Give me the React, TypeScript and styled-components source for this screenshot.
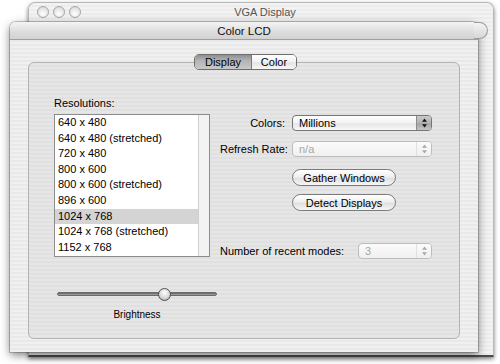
import React from "react";
import styled, { createGlobalStyle } from "styled-components";

const Global = createGlobalStyle`
  html, body { margin: 0; padding: 0; background: #ffffff; }
  body { font-family: "Liberation Sans", Arial, sans-serif; font-size: 11px; color: #000; }
  * { box-sizing: border-box; }
`;

const stripes = (a: string, b: string) =>
  `repeating-linear-gradient(to bottom, ${a} 0px, ${a} 2px, ${b} 2px, ${b} 4px)`;

const Desktop = styled.div`
  position: relative;
  width: 500px;
  height: 364px;
  overflow: hidden;
  background: #ffffff;
`;

const BackWindow = styled.div`
  position: absolute;
  left: 28px;
  top: 2px;
  width: 466px;
  height: 355px;
  border: 1px solid #b8b8b8;
  border-bottom: 2px solid #4a4a4a;
  border-radius: 7px 7px 0 0;
  background: ${stripes("#f3f3f3", "#ececec")};
  box-shadow: 0 2px 4px rgba(0, 0, 0, 0.5);
`;

const BackTitleBar = styled.div`
  height: 18px;
  display: flex;
  align-items: center;
  padding-left: 8px;
`;

const Lights = styled.div`
  display: flex;
  gap: 4px;
`;

const Light = styled.span`
  width: 12px;
  height: 12px;
  border-radius: 50%;
  border: 1px solid #a5a5a5;
  background: radial-gradient(circle at 50% 70%, #ffffff 0%, #e6e6e6 60%, #cfcfcf 100%);
`;

const BackTitle = styled.div`
  flex: 1;
  text-align: center;
  color: #555;
  font-size: 11px;
  padding-right: 44px;
`;

const FrontWindow = styled.div`
  position: absolute;
  left: 10px;
  top: 22px;
  width: 468px;
  height: 330px;
  display: flex;
  flex-direction: column;
  border-radius: 6px 6px 0 0;
  background: ${stripes("#f0f0f0", "#e9e9e9")};
  box-shadow: 0 0 0 1px rgba(0, 0, 0, 0.2), 0 3px 10px rgba(0, 0, 0, 0.5);
`;

const TitleBar = styled.div`
  position: relative;
  height: 18px;
  flex: none;
  display: flex;
  align-items: center;
  justify-content: center;
  font-size: 11.5px;
  color: #111;
  border-radius: 6px 6px 0 0;
  border-bottom: 1px solid #a0a0a0;
  background: linear-gradient(to bottom, #f4f4f4, #dcdcdc 60%, #d2d2d2);
`;

const TitleCap = styled.span`
  position: absolute;
  right: -10px;
  top: 0;
  width: 14px;
  height: 17px;
  border: 1px solid #9a9a9a;
  border-left: none;
  border-radius: 0 9px 9px 0;
  background: linear-gradient(to bottom, #f4f4f4, #d6d6d6);
`;

const Body = styled.div`
  flex: 1;
  display: flex;
  flex-direction: column;
  align-items: stretch;
  padding: 14px 18px 13px 18px;
`;

const Segmented = styled.div`
  position: relative;
  z-index: 1;
  align-self: center;
  margin-left: 3px;
  margin-bottom: -8px;
  display: flex;
  height: 16px;
  border: 1px solid #6e6e6e;
  border-radius: 5px;
  overflow: hidden;
  background: #fff;
`;

const Segment = styled.div<{ $active?: boolean; $w: number }>`
  width: ${(p) => p.$w}px;
  display: flex;
  align-items: center;
  justify-content: center;
  font-size: 11px;
  line-height: 14px;
  background: ${(p) =>
    p.$active
      ? "linear-gradient(to bottom, #8f8f8f, #b4b4b4 40%, #c8c8c8)"
      : "linear-gradient(to bottom, #ffffff, #f1f1f1 50%, #e4e4e4 55%, #f7f7f7)"};
  & + & {
    border-left: 1px solid #7a7a7a;
  }
`;

const TabBox = styled.div`
  flex: 1;
  border: 1px solid #b3b3b3;
  border-radius: 6px;
  background: ${stripes("#e6e6e6", "#e0e0e0")};
  padding: 33px 27px 0 25px;
  display: grid;
  grid-template-columns: 156px 1fr;
  column-gap: 10px;
  align-items: start;
`;

const LeftCol = styled.div`
  display: flex;
  flex-direction: column;
`;

const Label = styled.div`
  line-height: 14px;
  height: 14px;
  white-space: nowrap;
`;

const ListBox = styled.div`
  margin-top: 4px;
  height: 143px;
  display: flex;
  border: 1px solid #8c8c8c;
  background: #fff;
`;

const Rows = styled.div`
  flex: 1;
`;

const Row = styled.div<{ $selected?: boolean }>`
  height: 15.6px;
  line-height: 15.6px;
  padding-left: 3px;
  white-space: nowrap;
  background: ${(p) => (p.$selected ? "#d4d4d4" : "transparent")};
`;

const ScrollTrack = styled.div`
  width: 11px;
  border-left: 1px solid #cfcfcf;
  background: #f3f3f3;
`;

const Slider = styled.div`
  position: relative;
  margin-top: 31px;
  margin-left: 3px;
  width: 160px;
  height: 12px;
  display: flex;
  align-items: center;
`;

const Track = styled.div`
  width: 100%;
  height: 4px;
  border-radius: 2px;
  background: linear-gradient(to bottom, #5e5e5e, #8a8a8a 60%, #b0b0b0);
  border: 1px solid #6a6a6a;
`;

const Knob = styled.span`
  position: absolute;
  top: 0;
  width: 13px;
  height: 13px;
  border-radius: 50%;
  border: 1px solid #4f4f4f;
  background: radial-gradient(circle at 50% 35%, #ffffff 0%, #d8d8d8 55%, #9c9c9c 100%);
`;

const Caption = styled.div`
  margin-top: 9px;
  margin-left: 3px;
  width: 160px;
  text-align: center;
  font-size: 10px;
  line-height: 12px;
`;

const RightCol = styled.div`
  padding-top: 19px;
  display: flex;
  flex-direction: column;
`;

const FieldRow = styled.div<{ $gap?: number }>`
  display: grid;
  grid-template-columns: 65px 140px;
  column-gap: 7px;
  align-items: center;
  margin-top: ${(p) => p.$gap ?? 0}px;
`;

const FieldLabel = styled.div`
  text-align: right;
  white-space: nowrap;
`;

const Popup = styled.div<{ $disabled?: boolean; $w?: number }>`
  width: ${(p) => (p.$w ? `${p.$w}px` : "100%")};
  height: 16px;
  display: flex;
  border: 1px solid ${(p) => (p.$disabled ? "#bdbdbd" : "#767676")};
  border-radius: 4px;
  overflow: hidden;
  background: ${(p) =>
    p.$disabled
      ? "linear-gradient(to bottom, #fbfbfb, #f0f0f0)"
      : "linear-gradient(to bottom, #ffffff, #f2f2f2 50%, #e6e6e6 55%, #f8f8f8)"};
  color: ${(p) => (p.$disabled ? "#a6a6a6" : "#000")};
`;

const PopupText = styled.div`
  flex: 1;
  padding-left: 6px;
  line-height: 14px;
  white-space: nowrap;
`;

const PopupArrows = styled.div<{ $disabled?: boolean }>`
  width: 15px;
  display: flex;
  align-items: center;
  justify-content: center;
  border-left: 1px solid ${(p) => (p.$disabled ? "#e0e0e0" : "#8c8c8c")};
  background: ${(p) =>
    p.$disabled
      ? "linear-gradient(to bottom, #fbfbfb, #f0f0f0)"
      : "linear-gradient(to bottom, #c9c9c9, #b2b2b2 50%, #a4a4a4 55%, #c4c4c4)"};
`;

const PushButton = styled.div<{ $gap: number }>`
  margin-left: 72px;
  margin-top: ${(p) => p.$gap}px;
  width: 104px;
  height: 17px;
  display: flex;
  align-items: center;
  justify-content: center;
  border: 1px solid #7a7a7a;
  border-radius: 9px;
  background: linear-gradient(to bottom, #ffffff, #f0f0f0 45%, #e0e0e0 55%, #f6f6f6);
  white-space: nowrap;
`;

const SplitRow = styled.div`
  margin-top: 32px;
  display: flex;
  align-items: center;
  justify-content: space-between;
  width: 212px;
`;

const Arrows: React.FC<{ color: string }> = ({ color }) => (
  <svg width="7" height="10" viewBox="0 0 7 10">
    <path d="M3.5 0.5 L6 3.8 L1 3.8 Z" fill={color} />
    <path d="M3.5 9.5 L6 6.2 L1 6.2 Z" fill={color} />
  </svg>
);

const resolutions = [
  "640 x 480",
  "640 x 480 (stretched)",
  "720 x 480",
  "800 x 600",
  "800 x 600 (stretched)",
  "896 x 600",
  "1024 x 768",
  "1024 x 768 (stretched)",
  "1152 x 768",
];

export default function App() {
  const brightness = 0.67;
  return (
    <>
      <Global />
      <Desktop>
        <BackWindow>
          <BackTitleBar>
            <Lights>
              <Light />
              <Light />
              <Light />
            </Lights>
            <BackTitle>VGA Display</BackTitle>
          </BackTitleBar>
        </BackWindow>
        <FrontWindow>
          <TitleBar>
            Color LCD
            <TitleCap />
          </TitleBar>
          <Body>
            <Segmented>
              <Segment $active $w={56}>Display</Segment>
              <Segment $w={45}>Color</Segment>
            </Segmented>
            <TabBox>
              <LeftCol>
                <Label>Resolutions:</Label>
                <ListBox>
                  <Rows>
                    {resolutions.map((r) => (
                      <Row key={r} $selected={r === "1024 x 768"}>
                        {r}
                      </Row>
                    ))}
                  </Rows>
                  <ScrollTrack />
                </ListBox>
                <Slider>
                  <Track />
                  <Knob style={{ left: `${brightness * 160 - 6.5}px` }} />
                </Slider>
                <Caption>Brightness</Caption>
              </LeftCol>
              <RightCol>
                <FieldRow>
                  <FieldLabel>Colors:</FieldLabel>
                  <Popup>
                    <PopupText>Millions</PopupText>
                    <PopupArrows>
                      <Arrows color="#111" />
                    </PopupArrows>
                  </Popup>
                </FieldRow>
                <FieldRow $gap={10}>
                  <FieldLabel>Refresh Rate:</FieldLabel>
                  <Popup $disabled>
                    <PopupText>n/a</PopupText>
                    <PopupArrows $disabled>
                      <Arrows color="#a8a8a8" />
                    </PopupArrows>
                  </Popup>
                </FieldRow>
                <PushButton $gap={12}>Gather Windows</PushButton>
                <PushButton $gap={8}>Detect Displays</PushButton>
                <SplitRow>
                  <Label>Number of recent modes:</Label>
                  <Popup $disabled $w={74}>
                    <PopupText>3</PopupText>
                    <PopupArrows $disabled>
                      <Arrows color="#a8a8a8" />
                    </PopupArrows>
                  </Popup>
                </SplitRow>
              </RightCol>
            </TabBox>
          </Body>
        </FrontWindow>
      </Desktop>
    </>
  );
}
